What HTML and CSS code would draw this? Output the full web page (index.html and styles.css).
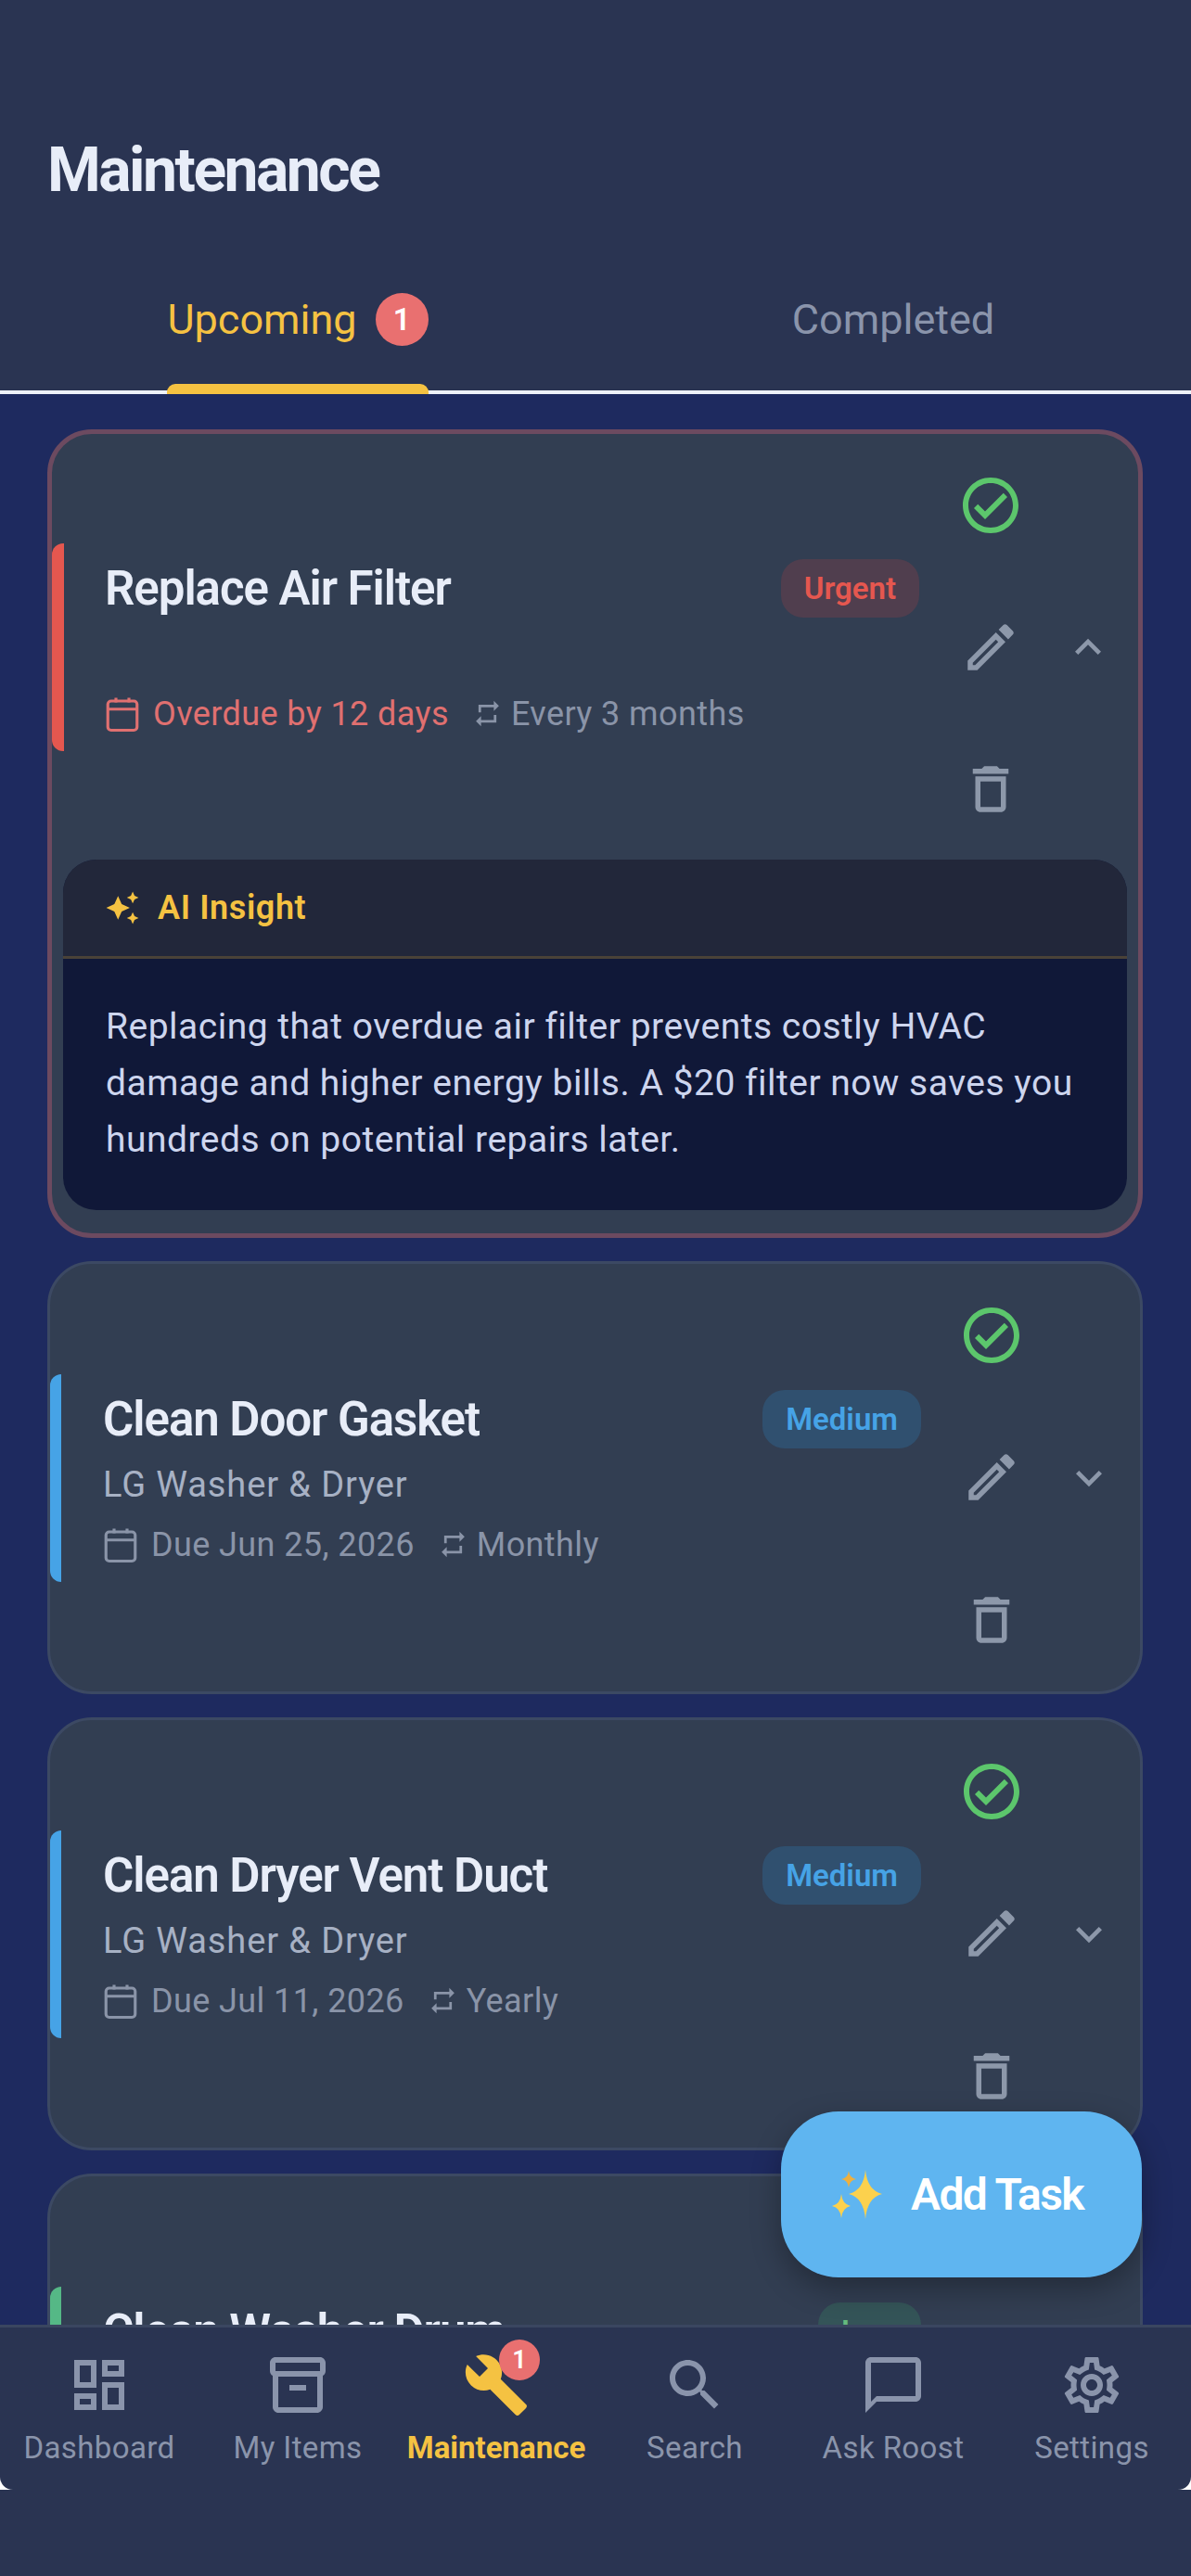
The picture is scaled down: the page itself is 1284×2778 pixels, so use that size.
FILE: index.html
```html
<!DOCTYPE html>
<html lang="en">

<head>
    <meta charset="UTF-8">
    <meta name="viewport" content="width=device-width, initial-scale=1.0">
    <title>Maintenance</title>
    <link rel="stylesheet" href="styles.css">
</head>

<body>
    <svg class="icon-defs" xmlns="http://www.w3.org/2000/svg">
        <symbol id="i-check" viewBox="0 0 24 24"><path d="M12 2C6.48 2 2 6.48 2 12s4.48 10 10 10 10-4.48 10-10S17.52 2 12 2zm0 18c-4.41 0-8-3.59-8-8s3.59-8 8-8 8 3.59 8 8-3.59 8-8 8zm4.59-12.42L10 14.17l-2.59-2.58L6 13l4 4 8-8z"/></symbol>
        <symbol id="i-edit" viewBox="0 0 24 24"><path d="M3 17.25V21h3.75L17.81 9.94l-3.75-3.75L3 17.25zM5.92 19H5v-.92l9.06-9.06.92.92L5.92 19zM20.71 5.63l-2.34-2.34c-.2-.2-.45-.29-.71-.29s-.51.1-.7.29l-1.83 1.83 3.75 3.75 1.83-1.83c.39-.39.39-1.02 0-1.41z"/></symbol>
        <symbol id="i-trash" viewBox="0 0 24 24"><path d="M6 19c0 1.1.9 2 2 2h8c1.1 0 2-.9 2-2V7H6v12zM8 9h8v10H8V9zm7.5-5l-1-1h-5l-1 1H5v2h14V4h-3.5z"/></symbol>
        <symbol id="i-less" viewBox="0 0 24 24"><path d="M12 8l-6 6 1.41 1.41L12 10.83l4.59 4.58L18 14z"/></symbol>
        <symbol id="i-more" viewBox="0 0 24 24"><path d="M16.59 8.59L12 13.17 7.41 8.59 6 10l6 6 6-6z"/></symbol>
        <symbol id="i-repeat" viewBox="0 0 24 24"><path d="M7 7h10v3l4-4-4-4v3H5v6h2V7zm10 10H7v-3l-4 4 4 4v-3h12v-6h-2v4z"/></symbol>
        <symbol id="i-calendar" viewBox="0 0 24 24"><path d="M5 4h14a2 2 0 0 1 2 2v14a2 2 0 0 1-2 2H5a2 2 0 0 1-2-2V6a2 2 0 0 1 2-2zM3 9h18M8 2v3M16 2v3" fill="none" stroke="currentColor" stroke-width="1.8"/></symbol>
        <symbol id="i-sparkle" viewBox="0 0 24 24"><path d="M19 9l1.25-2.75L23 5l-2.75-1.25L19 1l-1.25 2.75L15 5l2.75 1.25L19 9zm-7.5.5L9 4 6.5 9.5 1 12l5.5 2.5L9 20l2.5-5.5L17 12l-5.5-2.5zM19 15l-1.25 2.75L15 19l2.75 1.25L19 23l1.25-2.75L23 19l-2.75-1.25L19 15z"/></symbol>
        <symbol id="i-dashboard" viewBox="0 0 24 24"><path d="M19 5v2h-4V5h4M9 5v6H5V5h4m10 8v6h-4v-6h4M9 17v2H5v-2h4M21 3h-8v6h8V3zM11 3H3v10h8V3zm10 8h-8v10h8V11zm-10 4H3v6h8v-6z"/></symbol>
        <symbol id="i-box" viewBox="0 0 24 24"><path d="M20 2H4c-1 0-2 .9-2 2v3.01c0 .72.43 1.34 1 1.69V20c0 1.1 1.1 2 2 2h14c.9 0 2-.9 2-2V8.7c.57-.35 1-.97 1-1.69V4c0-1.1-1-2-2-2zm-1 18H5V9h14v11zm1-13H4V4h16v3zM9 12h6v2H9z"/></symbol>
        <symbol id="i-wrench" viewBox="0 0 24 24"><path d="M22.7 19l-9.1-9.1c.9-2.3.4-5-1.5-6.9-2-2-5-2.4-7.4-1.3L9 6 6 9 1.6 4.7C.4 7.1.9 10.1 2.9 12.1c1.9 1.9 4.6 2.4 6.9 1.5l9.1 9.1c.4.4 1 .4 1.4 0l2.3-2.3c.5-.4.5-1.1.1-1.4z"/></symbol>
        <symbol id="i-search" viewBox="0 0 24 24"><path d="M15.5 14h-.79l-.28-.27C15.41 12.59 16 11.11 16 9.5 16 5.91 13.09 3 9.5 3S3 5.91 3 9.5 5.91 16 9.5 16c1.61 0 3.09-.59 4.23-1.57l.27.28v.79l5 4.99L20.49 19l-4.99-5zm-6 0C7.01 14 5 11.99 5 9.5S7.01 5 9.5 5 14 7.01 14 9.5 11.99 14 9.5 14z"/></symbol>
        <symbol id="i-chat" viewBox="0 0 24 24"><path d="M20 2H4c-1.1 0-2 .9-2 2v18l4-4h14c1.1 0 2-.9 2-2V4c0-1.1-.9-2-2-2zm0 14H6l-2 2V4h16v12z"/></symbol>
        <symbol id="i-gear" viewBox="0 0 24 24"><path d="M19.43 12.98c.04-.32.07-.64.07-.98 0-.34-.03-.66-.07-.98l2.11-1.65c.19-.15.24-.42.12-.64l-2-3.46c-.09-.16-.26-.25-.44-.25-.06 0-.12.01-.17.03l-2.49 1c-.52-.4-1.08-.73-1.69-.98l-.38-2.65C14.46 2.18 14.25 2 14 2h-4c-.25 0-.46.18-.49.42l-.38 2.65c-.61.25-1.17.59-1.69.98l-2.49-1c-.06-.02-.12-.03-.18-.03-.17 0-.34.09-.43.25l-2 3.46c-.13.22-.07.49.12.64l2.11 1.65c-.04.32-.07.65-.07.98 0 .33.03.66.07.98l-2.11 1.65c-.19.15-.24.42-.12.64l2 3.46c.09.16.26.25.44.25.06 0 .12-.01.17-.03l2.49-1c.52.4 1.08.73 1.69.98l.38 2.65c.03.24.24.42.49.42h4c.25 0 .46-.18.49-.42l.38-2.65c.61-.25 1.17-.59 1.69-.98l2.49 1c.06.02.12.03.18.03.17 0 .34-.09.43-.25l2-3.46c.12-.22.07-.49-.12-.64l-2.11-1.65zm-1.98-1.71c.04.31.05.52.05.73 0 .21-.02.43-.05.73l-.14 1.13.89.7 1.08.84-.7 1.21-1.27-.51-1.04-.42-.9.68c-.43.32-.84.56-1.25.73l-1.06.43-.16 1.13-.2 1.35h-1.4l-.19-1.35-.16-1.13-1.06-.43c-.43-.18-.83-.41-1.23-.71l-.91-.7-1.06.43-1.27.51-.7-1.21 1.08-.84.89-.7-.14-1.13c-.03-.31-.05-.54-.05-.74s.02-.43.05-.73l.14-1.13-.89-.7-1.08-.84.7-1.21 1.27.51 1.04.42.9-.68c.43-.32.84-.56 1.25-.73l1.06-.43.16-1.13.2-1.35h1.39l.19 1.35.16 1.13 1.06.43c.43.18.83.41 1.23.71l.91.7 1.06-.43 1.27-.51.7 1.21-1.07.85-.89.7.14 1.13zM12 8c-2.21 0-4 1.79-4 4s1.79 4 4 4 4-1.79 4-4-1.79-4-4-4zm0 6c-1.1 0-2-.9-2-2s.9-2 2-2 2 .9 2 2-.9 2-2 2z"/></symbol>
    </svg>

    <div class="app">
        <header class="top">
            <h1 class="page-title">Maintenance</h1>
            <div class="tabs">
                <div class="tab tab-active">
                    <div class="tab-inner">
                        <div class="tab-label">Upcoming <span class="count-badge">1</span></div>
                        <div class="tab-bar"></div>
                    </div>
                </div>
                <div class="tab">
                    <div class="tab-inner">
                        <div class="tab-label">Completed</div>
                    </div>
                </div>
            </div>
        </header>

        <main class="task-list">
            <article class="task-card task-overdue">
                <div class="task-row">
                    <div class="stripe stripe-red"></div>
                    <div class="task-main">
                        <div class="task-head">
                            <h2 class="task-title">Replace Air Filter</h2>
                            <span class="pill pill-urgent">Urgent</span>
                        </div>
                        <div class="task-sub"></div>
                        <div class="task-meta">
                            <svg class="meta-cal meta-red"><use href="#i-calendar"/></svg>
                            <span class="meta-red">Overdue by 12 days</span>
                            <svg class="meta-rep"><use href="#i-repeat"/></svg>
                            <span>Every 3 months</span>
                        </div>
                    </div>
                    <div class="task-actions">
                        <svg class="act-check"><use href="#i-check"/></svg>
                        <svg class="act-icon"><use href="#i-edit"/></svg>
                        <svg class="act-icon"><use href="#i-trash"/></svg>
                    </div>
                    <div class="task-toggle"><svg class="chevron"><use href="#i-less"/></svg></div>
                </div>
                <section class="insight">
                    <div class="insight-head">
                        <svg class="insight-icon"><use href="#i-sparkle"/></svg>
                        <span>AI Insight</span>
                    </div>
                    <p class="insight-body">Replacing that overdue air filter prevents costly HVAC damage and higher energy bills. A $20 filter now saves you hundreds on potential repairs later.</p>
                </section>
            </article>

            <article class="task-card">
                <div class="task-row">
                    <div class="stripe stripe-blue"></div>
                    <div class="task-main">
                        <div class="task-head">
                            <h2 class="task-title">Clean Door Gasket</h2>
                            <span class="pill pill-medium">Medium</span>
                        </div>
                        <div class="task-sub">LG Washer &amp; Dryer</div>
                        <div class="task-meta">
                            <svg class="meta-cal"><use href="#i-calendar"/></svg>
                            <span>Due Jun 25, 2026</span>
                            <svg class="meta-rep"><use href="#i-repeat"/></svg>
                            <span>Monthly</span>
                        </div>
                    </div>
                    <div class="task-actions">
                        <svg class="act-check"><use href="#i-check"/></svg>
                        <svg class="act-icon"><use href="#i-edit"/></svg>
                        <svg class="act-icon"><use href="#i-trash"/></svg>
                    </div>
                    <div class="task-toggle"><svg class="chevron"><use href="#i-more"/></svg></div>
                </div>
            </article>

            <article class="task-card">
                <div class="task-row">
                    <div class="stripe stripe-blue"></div>
                    <div class="task-main">
                        <div class="task-head">
                            <h2 class="task-title">Clean Dryer Vent Duct</h2>
                            <span class="pill pill-medium">Medium</span>
                        </div>
                        <div class="task-sub">LG Washer &amp; Dryer</div>
                        <div class="task-meta">
                            <svg class="meta-cal"><use href="#i-calendar"/></svg>
                            <span>Due Jul 11, 2026</span>
                            <svg class="meta-rep"><use href="#i-repeat"/></svg>
                            <span>Yearly</span>
                        </div>
                    </div>
                    <div class="task-actions">
                        <svg class="act-check"><use href="#i-check"/></svg>
                        <svg class="act-icon"><use href="#i-edit"/></svg>
                        <svg class="act-icon"><use href="#i-trash"/></svg>
                    </div>
                    <div class="task-toggle"><svg class="chevron"><use href="#i-more"/></svg></div>
                </div>
            </article>

            <article class="task-card">
                <div class="task-row">
                    <div class="stripe stripe-green"></div>
                    <div class="task-main">
                        <div class="task-head">
                            <h2 class="task-title">Clean Washer Drum</h2>
                            <span class="pill pill-low">Low</span>
                        </div>
                        <div class="task-sub"></div>
                        <div class="task-meta"></div>
                    </div>
                    <div class="task-actions"></div>
                    <div class="task-toggle"></div>
                </div>
            </article>
        </main>

        <button class="fab">
            <svg class="fab-stars" viewBox="0 0 56 54">
                <path d="M36 0Q38 22 54 26Q38 30 36 53Q34 30 18 26Q34 22 36 0Z" fill="#fcd14d"/>
                <path d="M10 26Q11 37 20 39Q11 41 10 52Q9 41 0 39Q9 37 10 26Z" fill="#fcd14d"/>
                <path d="M18 1Q19 9 26 10Q19 11 18 19Q17 11 10 10Q17 9 18 1Z" fill="#eeb03f"/>
            </svg>
            <span>Add Task</span>
        </button>

        <div class="nav-shell">
            <nav class="bottom-nav">
                <div class="nav-item">
                    <svg class="nav-icon"><use href="#i-dashboard"/></svg>
                    <span class="nav-label">Dashboard</span>
                </div>
                <div class="nav-item">
                    <svg class="nav-icon"><use href="#i-box"/></svg>
                    <span class="nav-label">My Items</span>
                </div>
                <div class="nav-item nav-active">
                    <div class="nav-icon-wrap">
                        <svg class="nav-icon"><use href="#i-wrench"/></svg>
                        <span class="nav-badge">1</span>
                    </div>
                    <span class="nav-label">Maintenance</span>
                </div>
                <div class="nav-item">
                    <svg class="nav-icon"><use href="#i-search"/></svg>
                    <span class="nav-label">Search</span>
                </div>
                <div class="nav-item">
                    <svg class="nav-icon"><use href="#i-chat"/></svg>
                    <span class="nav-label">Ask Roost</span>
                </div>
                <div class="nav-item">
                    <svg class="nav-icon"><use href="#i-gear"/></svg>
                    <span class="nav-label">Settings</span>
                </div>
            </nav>
            <div class="safe-area"></div>
        </div>
    </div>
</body>

</html>
```

FILE: styles.css
```css
* {
    box-sizing: border-box;
}

body {
    margin: 0;
    padding: 0;
    font-family: Roboto, "Liberation Sans", sans-serif;
    background: #2a3452;
}

.icon-defs {
    display: none;
}

svg {
    fill: currentColor;
    display: block;
    flex-shrink: 0;
}

.app {
    position: relative;
    width: 1284px;
    height: 2778px;
    display: flex;
    flex-direction: column;
    overflow: hidden;
}

/* header + tabs */
.top {
    background: #2a3452;
    padding-top: 148px;
}

.page-title {
    margin: 0;
    padding-left: 51px;
    height: 72px;
    line-height: 72px;
    font-size: 66px;
    font-weight: 700;
    letter-spacing: -2.5px;
    color: #e8edf8;
}

.tabs {
    display: flex;
    height: 205px;
    border-bottom: 4px solid #eef1f8;
}

.tab {
    flex: 1;
    display: flex;
    justify-content: center;
    color: #8a94ab;
}

.tab-active {
    color: #f5c242;
}

.tab-inner {
    display: flex;
    flex-direction: column;
    justify-content: flex-end;
    margin-bottom: -4px;
    height: 205px;
}

.tab-label {
    display: flex;
    align-items: center;
    gap: 20px;
    height: 60px;
    margin-bottom: 51px;
    font-size: 45px;
    white-space: nowrap;
}

.tab-bar {
    height: 11px;
    margin-top: -11px;
    background: #f5c242;
    border-radius: 9px 9px 0 0;
}

.count-badge {
    width: 57px;
    height: 57px;
    border-radius: 50%;
    background: #e97070;
    color: #fff;
    font-size: 33px;
    font-weight: 600;
    display: flex;
    align-items: center;
    justify-content: center;
}

/* list */
.task-list {
    flex: 1;
    min-height: 0;
    overflow: hidden;
    background: #1e2a5f;
    padding: 38px 52px 0 51px;
    display: flex;
    flex-direction: column;
    gap: 25px;
}

.task-card {
    flex-shrink: 0;
    background: #323e52;
    border: 3px solid #3c4963;
    border-radius: 48px;
}

.task-overdue {
    border: 5px solid #6c4a60;
}

.task-row {
    display: flex;
    height: 461px;
    padding-right: 10px;
}

.task-overdue .task-row {
    height: 459px;
    padding-right: 9px;
}

.stripe {
    width: 12px;
    height: 224px;
    align-self: center;
    flex-shrink: 0;
    border-radius: 12px 0 0 12px;
}

.stripe-red {
    width: 13px;
    background: #e5574f;
}

.stripe-blue {
    background: #46a3e6;
}

.stripe-green {
    background: #55b886;
}

.task-main {
    flex: 1;
    min-width: 0;
    padding: 0 16px 0 45px;
    display: flex;
    flex-direction: column;
    justify-content: center;
}

.task-overdue .task-main {
    padding-left: 44px;
    padding-right: 17px;
}

.task-head {
    display: flex;
    align-items: center;
    justify-content: space-between;
    height: 63px;
}

.task-title {
    margin: 0;
    font-size: 51px;
    font-weight: 600;
    letter-spacing: -1.05px;
    color: #e8edf8;
    white-space: nowrap;
}

.pill {
    height: 63px;
    border-radius: 24px;
    padding: 0 25px;
    font-size: 33px;
    font-weight: 600;
    display: flex;
    align-items: center;
}

.pill-urgent {
    background: #503e4e;
    color: #e5574f;
}

.pill-medium {
    background: #30506f;
    color: #46a3e6;
}

.pill-low {
    background: #345458;
    color: #66bb7e;
}

.task-sub {
    height: 48px;
    margin-top: 15px;
    line-height: 48px;
    font-size: 38px;
    letter-spacing: 0.9px;
    color: #a7b1c4;
}

.task-meta {
    height: 46px;
    margin-top: 18px;
    display: flex;
    align-items: center;
    font-size: 36px;
    letter-spacing: 0.4px;
    color: #8a94a8;
    white-space: nowrap;
}

.meta-cal {
    width: 42px;
    height: 42px;
    margin: 0 12px 0 -2px;
}

.meta-rep {
    width: 33px;
    height: 33px;
    margin: 0 9px 0 25px;
}

.meta-red {
    color: #e07070;
}

.task-actions {
    width: 120px;
    flex-shrink: 0;
    display: grid;
    grid-template-rows: repeat(3, 1fr);
    place-items: center;
    color: #8d98aa;
}

.act-check {
    width: 72px;
    height: 72px;
    color: #5cc66c;
}

.act-icon {
    width: 66px;
    height: 66px;
}

.task-toggle {
    width: 90px;
    flex-shrink: 0;
    display: flex;
    align-items: center;
    justify-content: center;
    color: #8d98aa;
}

.chevron {
    width: 56px;
    height: 56px;
}

/* ai insight */
.insight {
    margin: 0 12px 25px;
    border-radius: 36px;
    overflow: hidden;
    background: #101838;
}

.insight-head {
    height: 107px;
    background: #22273a;
    border-bottom: 3px solid #4a4238;
    padding-left: 45px;
    display: flex;
    align-items: center;
    gap: 19px;
    font-size: 36px;
    font-weight: 600;
    letter-spacing: 0.6px;
    color: #f5c242;
}

.insight-icon {
    width: 38px;
    height: 38px;
}

.insight-body {
    margin: 0;
    padding: 43px 40px 45px 46px;
    font-size: 39px;
    line-height: 61px;
    letter-spacing: 0.5px;
    color: #cdd5ee;
}

/* floating button */
.fab {
    position: absolute;
    right: 53px;
    bottom: 322px;
    width: 389px;
    height: 179px;
    border: none;
    border-radius: 62px;
    background: #5fb5f0;
    box-shadow: 0 12px 32px rgba(0, 0, 0, 0.3);
    color: #fff;
    font-family: inherit;
    font-size: 48px;
    font-weight: 600;
    letter-spacing: -1.6px;
    display: flex;
    align-items: center;
    gap: 29px;
    padding: 0 0 0 55px;
}

.fab-stars {
    width: 56px;
    height: 54px;
}

/* bottom nav */
.nav-shell {
    background: #fff;
    flex-shrink: 0;
}

.bottom-nav {
    height: 178px;
    background: #2a3452;
    border-top: 3px solid #3a4660;
    border-radius: 0 0 14px 14px;
    display: grid;
    grid-template-columns: repeat(6, 1fr);
}

.safe-area {
    height: 93px;
    background: #2a3452;
}

.nav-item {
    display: flex;
    flex-direction: column;
    align-items: center;
    padding-top: 26px;
    color: #8a94ab;
}

.nav-active {
    color: #f5c242;
}

.nav-icon {
    width: 72px;
    height: 72px;
}

.nav-icon-wrap {
    position: relative;
}

.nav-badge {
    position: absolute;
    top: -13px;
    right: -11px;
    width: 44px;
    height: 44px;
    border-radius: 50%;
    background: #e97070;
    color: #fff;
    font-size: 27px;
    font-weight: 600;
    display: flex;
    align-items: center;
    justify-content: center;
}

.nav-label {
    margin-top: 12px;
    line-height: 40px;
    font-size: 33px;
    letter-spacing: 0.4px;
    white-space: nowrap;
}

.nav-active .nav-label {
    font-weight: 700;
    letter-spacing: 0;
}
```
